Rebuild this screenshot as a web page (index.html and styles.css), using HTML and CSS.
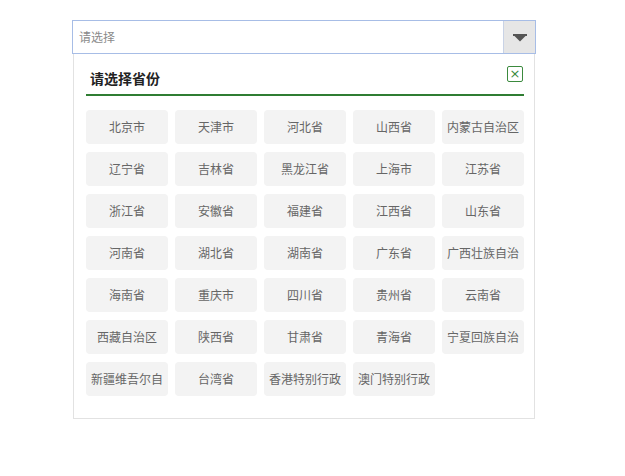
FILE: index.html
```html
<!DOCTYPE html>
<html lang="zh-CN">
<head>
<meta charset="utf-8">
<title>省份选择</title>
<link rel="stylesheet" href="styles.css">
</head>
<body>
<div class="picker">
  <div class="field">
    <span class="placeholder">请选择</span>
    <span class="toggle">
      <svg width="14" height="8" viewBox="0 0 14 8"><rect x="0" y="0" width="14" height="2" fill="#555"/><polygon points="1.5,2 12.5,2 7,7.5" fill="#555"/></svg>
    </span>
  </div>
  <div class="panel">
    <div class="header">
      <span class="title">请选择省份</span>
      <span class="close">×</span>
    </div>
    <div class="grid">
      <span class="item"><span class="label">北京市</span></span>
      <span class="item"><span class="label">天津市</span></span>
      <span class="item"><span class="label">河北省</span></span>
      <span class="item"><span class="label">山西省</span></span>
      <span class="item"><span class="label">内蒙古自治区</span></span>
      <span class="item"><span class="label">辽宁省</span></span>
      <span class="item"><span class="label">吉林省</span></span>
      <span class="item"><span class="label">黑龙江省</span></span>
      <span class="item"><span class="label">上海市</span></span>
      <span class="item"><span class="label">江苏省</span></span>
      <span class="item"><span class="label">浙江省</span></span>
      <span class="item"><span class="label">安徽省</span></span>
      <span class="item"><span class="label">福建省</span></span>
      <span class="item"><span class="label">江西省</span></span>
      <span class="item"><span class="label">山东省</span></span>
      <span class="item"><span class="label">河南省</span></span>
      <span class="item"><span class="label">湖北省</span></span>
      <span class="item"><span class="label">湖南省</span></span>
      <span class="item"><span class="label">广东省</span></span>
      <span class="item"><span class="label">广西壮族自治区</span></span>
      <span class="item"><span class="label">海南省</span></span>
      <span class="item"><span class="label">重庆市</span></span>
      <span class="item"><span class="label">四川省</span></span>
      <span class="item"><span class="label">贵州省</span></span>
      <span class="item"><span class="label">云南省</span></span>
      <span class="item"><span class="label">西藏自治区</span></span>
      <span class="item"><span class="label">陕西省</span></span>
      <span class="item"><span class="label">甘肃省</span></span>
      <span class="item"><span class="label">青海省</span></span>
      <span class="item"><span class="label">宁夏回族自治区</span></span>
      <span class="item"><span class="label">新疆维吾尔自治区</span></span>
      <span class="item"><span class="label">台湾省</span></span>
      <span class="item"><span class="label">香港特别行政区</span></span>
      <span class="item"><span class="label">澳门特别行政区</span></span>
    </div>
  </div>
</div>
</body>
</html>
```

FILE: styles.css
```css
html, body {
  margin: 0;
  padding: 0;
  background: #fff;
}
body {
  font-family: "Noto Sans CJK SC", "Liberation Sans", sans-serif;
  padding: 20px 0 0 72px;
}
.picker {
  width: 464px;
}
.field {
  box-sizing: border-box;
  height: 34px;
  border: 1px solid #a7bde6;
  display: flex;
  align-items: stretch;
  background: #fff;
}
.placeholder {
  flex: 1;
  padding-left: 6px;
  font-size: 12px;
  line-height: 32px;
  color: #8a8a8a;
}
.toggle {
  width: 31px;
  background: #e6e6e6;
  border-left: 1px solid #c9d3e6;
  display: flex;
  align-items: center;
  justify-content: center;
}
.toggle svg {
  display: block;
  margin-top: 2px;
}
.panel {
  box-sizing: border-box;
  margin: 0 1px;
  border: 1px solid #e2e2e2;
  border-top: none;
  padding: 0 10px 22px 12px;
}
.header {
  position: relative;
  padding: 14px 0 6px 4px;
  border-bottom: 2px solid #2f7d32;
}
.title {
  display: block;
  font-size: 14px;
  font-weight: bold;
  line-height: 20px;
  color: #222;
}
.close {
  position: absolute;
  right: 1px;
  top: 12px;
  box-sizing: border-box;
  width: 16px;
  height: 16px;
  border: 1px solid #3b8a3e;
  border-radius: 2px;
  color: #3b8a3e;
  font-size: 13px;
  line-height: 13px;
  text-align: center;
  font-family: "DejaVu Sans", sans-serif;
}
.grid {
  margin-top: 14px;
  display: grid;
  grid-template-columns: repeat(5, 82px);
  column-gap: 7px;
  row-gap: 8px;
}
.item {
  box-sizing: border-box;
  height: 34px;
  padding: 0 5px;
  background: #f3f3f3;
  border-radius: 4px;
}
.label {
  display: block;
  overflow: hidden;
  white-space: nowrap;
  font-size: 12px;
  line-height: 34px;
  color: #666;
  text-align: center;
}
```
